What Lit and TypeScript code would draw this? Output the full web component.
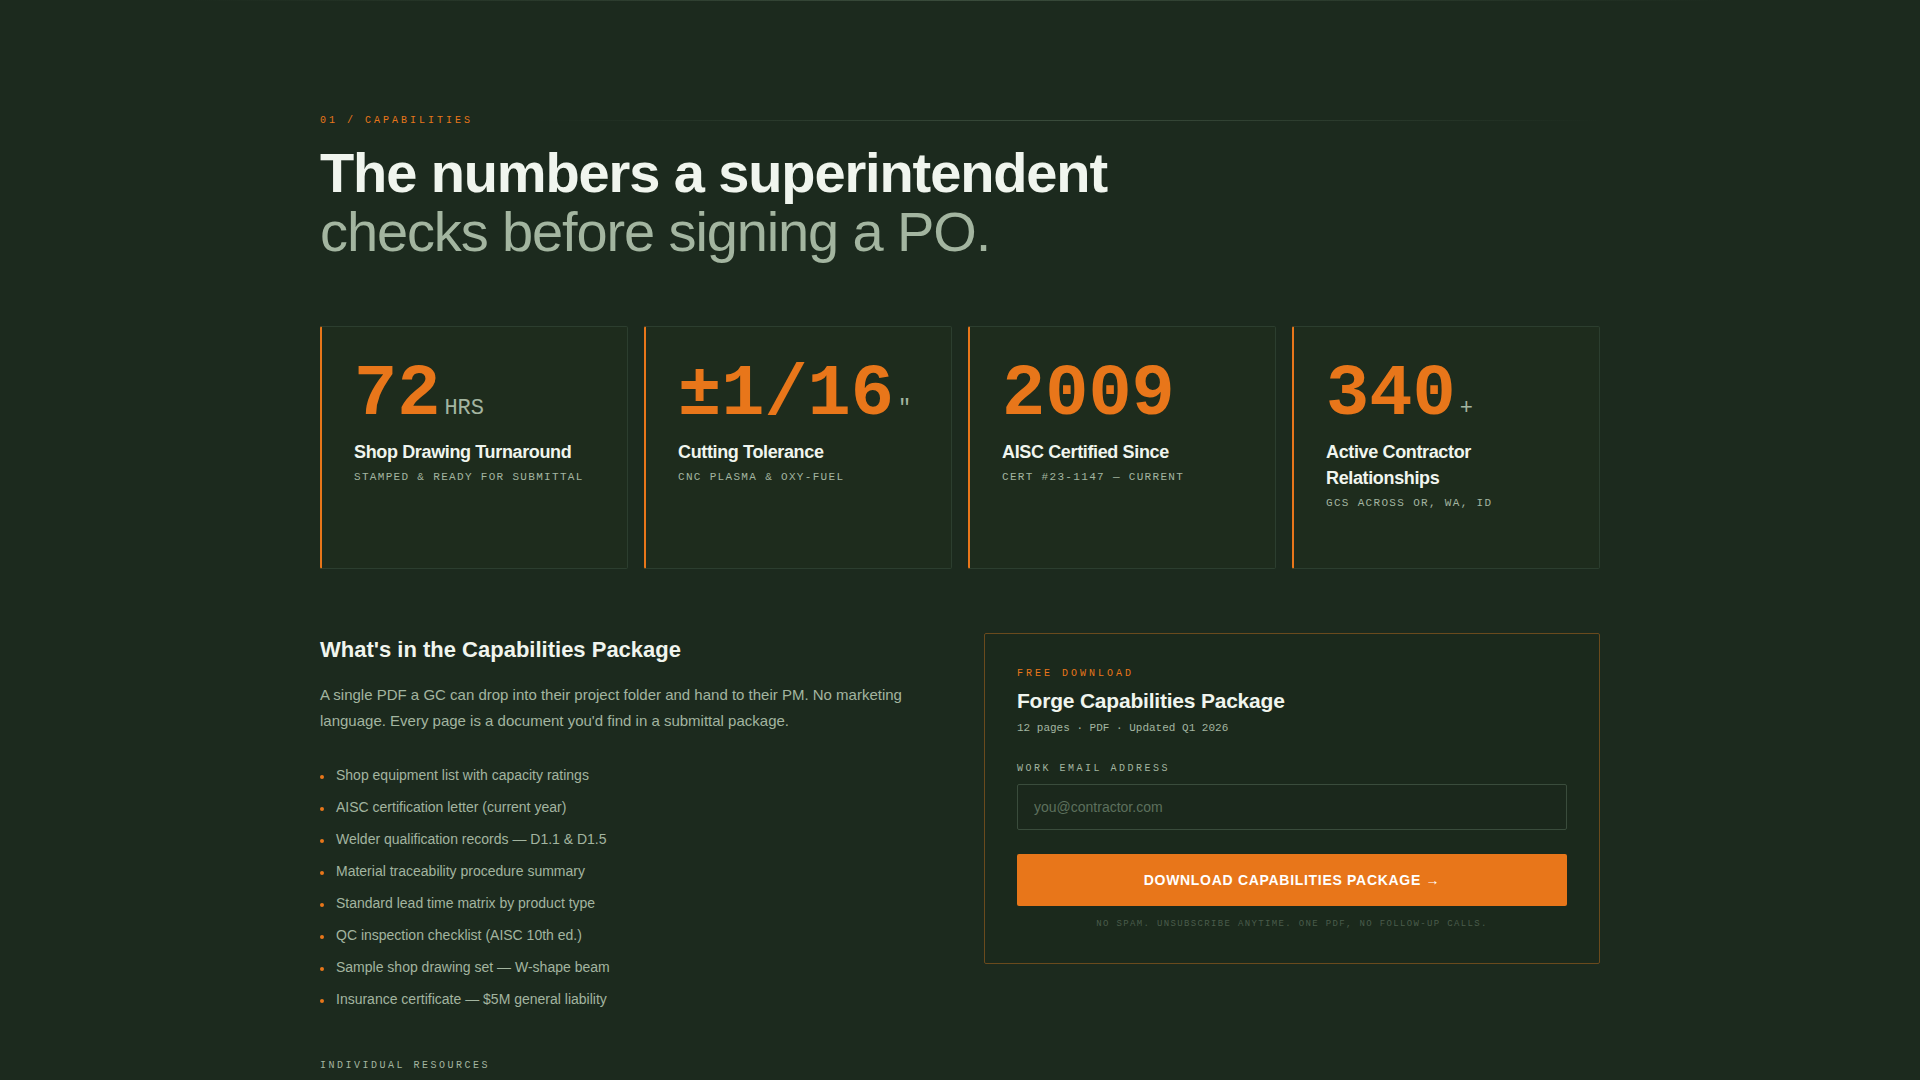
import { LitElement, html, css, nothing } from "lit";
import { customElement, property } from "lit/decorators.js";

interface Stat {
  value: string;
  unit?: string;
  title: string;
  note: string;
}

const STATS: Stat[] = [
  { value: "72", unit: "HRS", title: "Shop Drawing Turnaround", note: "Stamped & ready for submittal" },
  { value: "±1/16", unit: "\"", title: "Cutting Tolerance", note: "CNC plasma & oxy-fuel" },
  { value: "2009", title: "AISC Certified Since", note: "Cert #23-1147 — current" },
  { value: "340", unit: "+", title: "Active Contractor Relationships", note: "GCs across OR, WA, ID" },
];

const CONTENTS: string[] = [
  "Shop equipment list with capacity ratings",
  "AISC certification letter (current year)",
  "Welder qualification records — D1.1 & D1.5",
  "Material traceability procedure summary",
  "Standard lead time matrix by product type",
  "QC inspection checklist (AISC 10th ed.)",
  "Sample shop drawing set — W-shape beam",
  "Insurance certificate — $5M general liability",
];

@customElement("stat-card")
export class StatCard extends LitElement {
  @property({ attribute: false }) stat!: Stat;

  static styles = css`
    :host {
      display: block;
      box-sizing: border-box;
      padding: 32px 32px 57px;
      border: 1px solid #2c3e2f;
      border-left: 2px solid #e8761a;
      border-radius: 2px;
      background: #1e2c1d;
    }
    .figure {
      display: flex;
      align-items: baseline;
      gap: 4px;
      height: 72px;
      margin: 0 0 8px;
      font-family: "Liberation Mono", monospace;
      line-height: 72px;
      white-space: nowrap;
    }
    .value {
      font-size: 72px;
      font-weight: 700;
      color: #e8761a;
    }
    .unit {
      font-size: 22px;
      color: #a3b5a0;
    }
    .title {
      margin: 0 0 4px;
      font-size: 18px;
      font-weight: 700;
      line-height: 26px;
      letter-spacing: -0.02em;
      color: #f0f5ee;
    }
    .note {
      margin: 0;
      font-family: "Liberation Mono", monospace;
      font-size: 11px;
      line-height: 16px;
      letter-spacing: 0.12em;
      text-transform: uppercase;
      color: #a3b5a0;
    }
  `;

  render() {
    const { value, unit, title, note } = this.stat;
    return html`
      <p class="figure">
        <span class="value">${value}</span>
        ${unit ? html`<span class="unit">${unit}</span>` : nothing}
      </p>
      <h3 class="title">${title}</h3>
      <p class="note">${note}</p>
    `;
  }
}

@customElement("download-form")
export class DownloadForm extends LitElement {
  static styles = css`
    :host {
      display: block;
      box-sizing: border-box;
      padding: 32px;
      border: 1px solid #6a4a1d;
      border-radius: 2px;
      background: #1b291c;
    }
    form {
      display: flex;
      flex-direction: column;
    }
    .eyebrow,
    .meta,
    .label,
    .fine {
      margin: 0;
      font-family: "Liberation Mono", monospace;
      line-height: 16px;
      color: #a3b5a0;
    }
    .eyebrow {
      margin-bottom: 4px;
      font-size: 10px;
      line-height: 15px;
      letter-spacing: 0.3em;
      text-transform: uppercase;
      color: #e8761a;
    }
    .title {
      margin: 0 0 4px;
      font-size: 21px;
      font-weight: 700;
      line-height: 31px;
      letter-spacing: -0.01em;
      color: #f0f5ee;
    }
    .meta {
      margin-bottom: 25px;
      font-size: 11px;
    }
    .label {
      margin-bottom: 7px;
      font-size: 10px;
      letter-spacing: 0.25em;
      text-transform: uppercase;
    }
    .input {
      box-sizing: border-box;
      width: 100%;
      height: 46px;
      margin: 0 0 24px;
      padding: 0 16px;
      border: 1px solid #3a4c3c;
      border-radius: 2px;
      outline: none;
      background: #1b281c;
      font: 14px "Liberation Sans", Arial, sans-serif;
      color: #f0f5ee;
    }
    .input::placeholder {
      color: #5d705d;
      opacity: 1;
    }
    .submit {
      height: 52px;
      margin: 0 0 12px;
      padding: 0 24px;
      border: 0;
      border-radius: 2px;
      background: #e8761a;
      font: 700 14px "Liberation Sans", Arial, sans-serif;
      letter-spacing: 0.05em;
      text-transform: uppercase;
      color: #fff;
      cursor: pointer;
    }
    .fine {
      font-size: 9px;
      line-height: 13px;
      letter-spacing: 0.15em;
      text-align: center;
      text-transform: uppercase;
      color: #4a5c4b;
    }
  `;

  render() {
    return html`
      <form @submit=${(e: Event) => e.preventDefault()}>
        <p class="eyebrow">Free download</p>
        <h3 class="title">Forge Capabilities Package</h3>
        <p class="meta">12 pages · PDF · Updated Q1 2026</p>
        <label class="label" for="email">Work email address</label>
        <input class="input" id="email" type="email" placeholder="you@contractor.com" />
        <button class="submit" type="submit">Download Capabilities Package →</button>
        <p class="fine">No spam. Unsubscribe anytime. One PDF, no follow-up calls.</p>
      </form>
    `;
  }
}

@customElement("app-root")
export class AppRoot extends LitElement {
  static styles = css`
    :host {
      display: block;
      box-sizing: border-box;
      min-height: 100vh;
      background: #1c2a1e;
      font-family: "Liberation Sans", Arial, sans-serif;
      color: #f0f5ee;
    }
    .rule {
      height: 1px;
      background: linear-gradient(90deg, transparent, #3a4c3c, transparent);
    }
    .edge {
      padding: 0 10%;
    }
    .section {
      box-sizing: border-box;
      max-width: 1328px;
      margin: 0 auto;
      padding: 112px 24px 0;
    }
    .header {
      display: flex;
      flex-direction: column;
      gap: 15px;
      margin-bottom: 65px;
    }
    .kicker {
      display: flex;
      align-items: center;
      gap: 64px;
    }
    .kicker .rule {
      flex: 1;
    }
    .eyebrow,
    .subhead {
      margin: 0;
      font-family: "Liberation Mono", monospace;
      font-size: 10px;
      font-weight: 400;
      line-height: 15px;
      text-transform: uppercase;
    }
    .eyebrow {
      letter-spacing: 0.3em;
      color: #e8761a;
    }
    .headline {
      margin: 0;
      font-size: 56px;
      font-weight: 700;
      line-height: 59px;
      letter-spacing: -0.02em;
    }
    .soft {
      display: block;
      font-weight: 400;
      color: #a3b5a0;
    }
    .stats {
      display: grid;
      grid-template-columns: repeat(4, minmax(0, 1fr));
      gap: 16px;
      margin-bottom: 64px;
    }
    .package {
      display: grid;
      grid-template-columns: repeat(2, minmax(0, 1fr));
      gap: 48px;
      align-items: start;
    }
    .title {
      margin: 0 0 16px;
      font-size: 22px;
      font-weight: 700;
      line-height: 33px;
    }
    .lead {
      margin: 0 0 30px;
      font-size: 15px;
      line-height: 26px;
      color: #a3b5a0;
    }
    .contents {
      display: flex;
      flex-direction: column;
      gap: 10px;
      margin: 0 0 48px;
      padding: 0;
      list-style: none;
    }
    .item {
      display: flex;
      align-items: center;
      gap: 12px;
      font-size: 14px;
      line-height: 22px;
      color: #a3b5a0;
    }
    .item::before {
      content: "";
      flex: none;
      width: 4px;
      height: 4px;
      margin-top: 4px;
      border-radius: 50%;
      background: #e8761a;
    }
    .subhead {
      letter-spacing: 0.25em;
      color: #a3b5a0;
    }
    @media (max-width: 1100px) {
      .stats {
        grid-template-columns: repeat(2, minmax(0, 1fr));
      }
      .package {
        grid-template-columns: minmax(0, 1fr);
      }
    }
  `;

  render() {
    return html`
      <div class="edge"><div class="rule"></div></div>
      <section class="section">
        <header class="header">
          <div class="kicker">
            <p class="eyebrow">01 / Capabilities</p>
            <div class="rule"></div>
          </div>
          <h1 class="headline">
            The numbers a superintendent
            <span class="soft">checks before signing a PO.</span>
          </h1>
        </header>
        <div class="stats">
          ${STATS.map((stat) => html`<stat-card .stat=${stat}></stat-card>`)}
        </div>
        <div class="package">
          <div>
            <h2 class="title">What's in the Capabilities Package</h2>
            <p class="lead">
              A single PDF a GC can drop into their project folder and hand to their PM. No marketing
              language. Every page is a document you'd find in a submittal package.
            </p>
            <ul class="contents">
              ${CONTENTS.map((item) => html`<li class="item">${item}</li>`)}
            </ul>
            <h3 class="subhead">Individual resources</h3>
          </div>
          <download-form></download-form>
        </div>
      </section>
    `;
  }
}
